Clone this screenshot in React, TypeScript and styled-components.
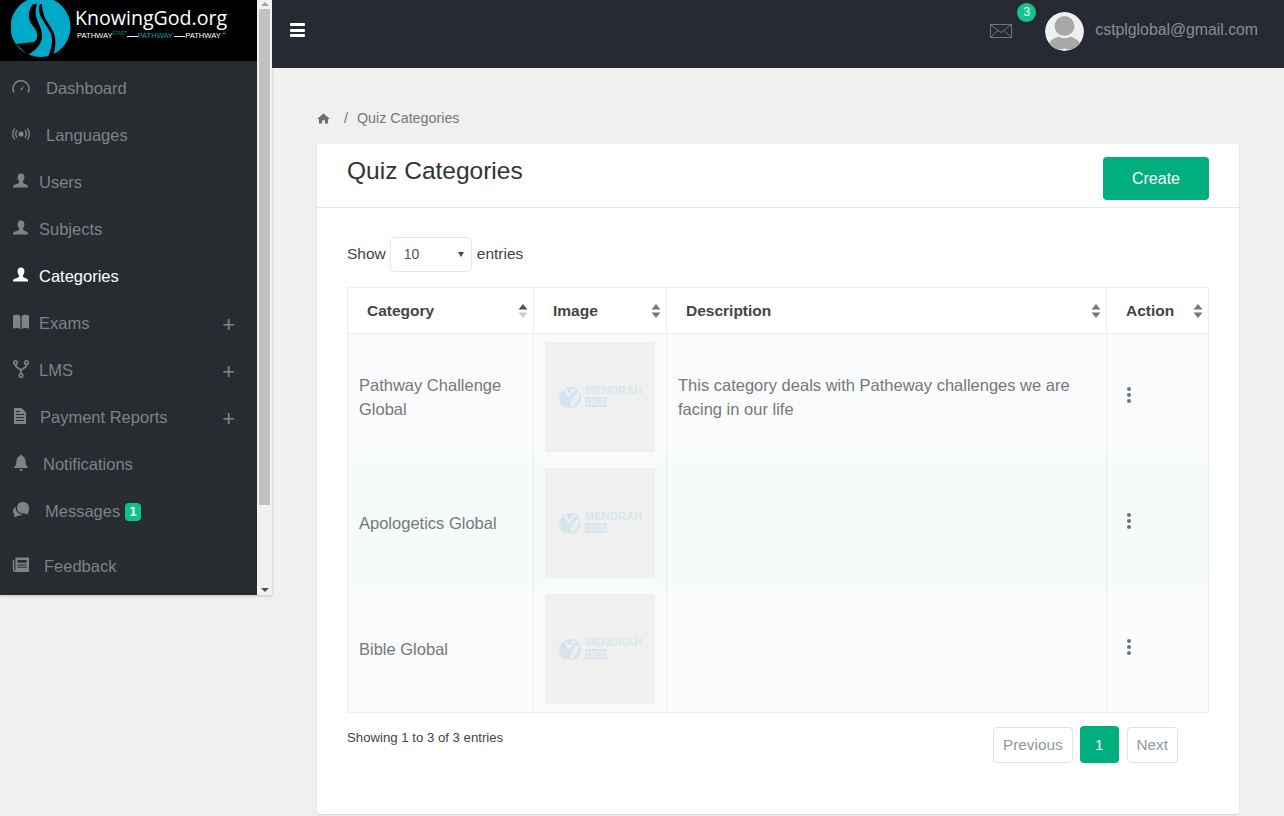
import styled, { createGlobalStyle } from 'styled-components';

const GlobalStyle = createGlobalStyle`
  html, body {
    margin: 0;
    padding: 0;
    height: 100%;
    overflow: hidden;
    background: #f0f0f0;
    font-family: "Liberation Sans", Arial, sans-serif;
  }
  * { box-sizing: border-box; }
`;

const icons: Record<string, React.ReactNode> = {
  gauge: (
    <>
      <path d="M2 14.5 A8 8 0 1 1 16 14.5" fill="none" stroke="currentColor" strokeWidth="1.5" />
      <path d="M8.3 11.5 L12 7.5 L10 12.5 Z" fill="currentColor" />
    </>
  ),
  broadcast: (
    <>
      <circle cx="9" cy="9" r="2.6" fill="currentColor" />
      <path d="M5.2 5.2 A5.5 5.5 0 0 0 5.2 12.8 M12.8 5.2 A5.5 5.5 0 0 1 12.8 12.8" fill="none" stroke="currentColor" strokeWidth="1.4" />
      <path d="M2.8 3.4 A8.6 8.6 0 0 0 2.8 14.6 M15.2 3.4 A8.6 8.6 0 0 1 15.2 14.6" fill="none" stroke="currentColor" strokeWidth="1.4" />
    </>
  ),
  user: (
    <path d="M9 1.5 C11.5 1.5 12.6 3.4 12.4 5.8 C12.3 7.6 11.4 8.8 10.9 9.6 C10.7 10.6 11.2 11.2 12.4 11.7 C14.4 12.5 16 12.9 16 14.6 L16 15.5 L1 15.5 L1 14.6 C1 12.9 3.6 12.5 5.6 11.7 C6.8 11.2 7.3 10.6 7.1 9.6 C6.6 8.8 5.7 7.6 5.6 5.8 C5.4 3.4 6.5 1.5 9 1.5 Z" fill="currentColor" />
  ),
  book: (
    <path d="M1 2.5 C3.5 1.5 6.5 1.5 8.4 3 L8.4 16 C6.5 14.6 3.5 14.6 1 15.6 Z M9.6 3 C11.5 1.5 14.5 1.5 17 2.5 L17 15.6 C14.5 14.6 11.5 14.6 9.6 16 Z" fill="currentColor" />
  ),
  fork: (
    <g fill="none" stroke="currentColor" strokeWidth="1.6">
      <circle cx="3.5" cy="2.6" r="1.8" />
      <circle cx="14.5" cy="2.6" r="1.8" />
      <circle cx="9" cy="15.6" r="1.8" />
      <path d="M3.5 4.4 C3.5 9 9 8 9 11 L9 13.8 M14.5 4.4 C14.5 9 9 8 9 11" />
    </g>
  ),
  file: (
    <>
      <path fillRule="evenodd" d="M2 1 L9.5 1 L14 5.5 L14 17 L2 17 Z M4 7 L4 8 L12 8 L12 7 Z M4 10 L4 11 L12 11 L12 10 Z M4 13 L4 14 L12 14 L12 13 Z M4 4 L4 5 L8 5 L8 4 Z" fill="currentColor" />
    </>
  ),
  bell: (
    <path d="M9 0.8 C9.8 0.8 10.2 1.3 10.2 2.1 C12.6 2.8 13.4 4.8 13.5 7.2 C13.6 10.2 14.2 11.6 15.8 13 L15.8 14 L2.2 14 L2.2 13 C3.8 11.6 4.4 10.2 4.5 7.2 C4.6 4.8 5.4 2.8 7.8 2.1 C7.8 1.3 8.2 0.8 9 0.8 Z M7.4 15 L10.6 15 C10.4 16.4 9.8 17 9 17 C8.2 17 7.6 16.4 7.4 15 Z" fill="currentColor" />
  ),
  chat: (
    <>
      <path d="M11 1 C14.6 1 17 3.4 17 6.8 C17 10 15.6 13.4 15.6 13.4 C14.6 12.6 13.4 12.4 11.4 12.4 C7.6 12.4 5 10 5 6.6 C5 3.4 7.4 1 11 1 Z" fill="currentColor" />
      <path d="M3.6 6 C3.6 10 6.4 13 10.4 13.6 C9 14.6 7.6 15 5.8 14.8 C4.8 15.6 3.6 16 1.6 16 C2.2 15.2 2.6 14.4 2.6 13.6 C1.4 12.6 1 11.4 1 10 C1 8.2 2 6.8 3.6 6 Z" fill="currentColor" />
    </>
  ),
  news: (
    <>
      <path fillRule="evenodd" d="M3.4 1.5 L17 1.5 L17 16 L3 16 C1.6 16 0.8 15 0.8 13.8 L0.8 4 L2.2 4 L2.2 13.8 C2.2 14.4 2.6 14.6 3.4 14.6 Z M5.4 4 L5.4 6.8 L14.6 6.8 L14.6 4 Z M5.4 8.4 L5.4 9.4 L14.6 9.4 L14.6 8.4 Z M5.4 10.8 L5.4 11.8 L14.6 11.8 L14.6 10.8 Z" fill="currentColor" />
    </>
  ),
};

const menu = [
  { label: 'Dashboard', icon: 'gauge', gap: 16 },
  { label: 'Languages', icon: 'broadcast', gap: 16 },
  { label: 'Users', icon: 'user', gap: 9 },
  { label: 'Subjects', icon: 'user', gap: 9 },
  { label: 'Categories', icon: 'user', gap: 9, active: true },
  { label: 'Exams', icon: 'book', gap: 9, more: true },
  { label: 'LMS', icon: 'fork', gap: 9, more: true },
  { label: 'Payment Reports', icon: 'file', gap: 10, more: true },
  { label: 'Notifications', icon: 'bell', gap: 13 },
  { label: 'Messages', icon: 'chat', gap: 15, badge: '1' },
  { label: 'Feedback', icon: 'news', gap: 14, tall: true },
];

const rows = [
  { name: 'Pathway Challenge Global', text: 'This category deals with Patheway challenges we are facing in our life' },
  { name: 'Apologetics Global', text: '' },
  { name: 'Bible Global', text: '' },
];

const columns = [
  { label: 'Category', width: 185, up: true },
  { label: 'Image', width: 133 },
  { label: 'Description', width: 440 },
  { label: 'Action', width: 102 },
];

function SortArrows({ up }: { up?: boolean }) {
  return (
    <SortIcon viewBox="0 0 10 16" width="10" height="16">
      <path d="M5 1 L9.5 6.5 L0.5 6.5 Z" fill={up ? '#555' : '#777'} />
      <path d="M5 15 L9.5 9.5 L0.5 9.5 Z" fill={up ? '#ccc' : '#777'} />
    </SortIcon>
  );
}

function Placeholder() {
  return (
    <Thumb>
      <svg viewBox="0 0 26 26" width="25" height="25">
        <path d="M2 8 C0 15 3 22 10 25 C6 20 4 14 2 8 Z" fill="#f5e3cc" />
        <circle cx="14" cy="13" r="11" fill="#d3e4ed" />
        <path d="M7 5 L12 13 L20 4 Z" fill="#eef2f3" />
        <circle cx="13" cy="6" r="2.4" fill="#d3e4ed" />
        <path d="M14 23 C13 17 17 10 23 7 C24 14 20 21 14 23 Z" fill="#e6eff2" />
      </svg>
      <ThumbText>
        <ThumbName>MENORAH</ThumbName>
        <ThumbTag>OES</ThumbTag>
      </ThumbText>
    </Thumb>
  );
}

export default function App() {
  return (
    <>
      <GlobalStyle />
      <Page>
        <Sidebar>
          <SideInner>
            <Logo>
              <svg viewBox="11 -3 60 60" width="60" height="60">
                <circle cx="40.5" cy="27" r="30" fill="#00a9c7" />
                <path d="M33 4 C27 12 28 20 33 26 C38 32 39 38 34 42 L16 44 L28 55 C36 50 42 44 42 36 C42 28 38 24 36 16 C35 12 36 8 37 4 Z" fill="#000" />
                <path d="M40 4 C38 8 39 14 42 19 C46 26 52 32 52 40 C52 46 50 52 47 60 L51 60 C55 52 56 44 55 38 C54 30 48 24 45 18 C43 14 42 8 42 4 Z" fill="#000" />
              </svg>
              <LogoText>
                <LogoTitle>KnowingGod.org</LogoTitle>
                <LogoSub>
                  <span>PATHWAY</span>
                  <LogoStart>START</LogoStart>
                  <LogoDash />
                  <LogoPath>PATHWAY</LogoPath>
                  <LogoDash />
                  <span>PATHWAY</span>
                  <LogoPlus>+</LogoPlus>
                </LogoSub>
              </LogoText>
            </Logo>
            <Menu>
              {menu.map((item) => (
                <MenuItem key={item.label} $active={item.active} $tall={item.tall}>
                  <MenuIcon viewBox="0 0 18 18" width="18" height="18" style={{ marginRight: item.gap }}>
                    {icons[item.icon]}
                  </MenuIcon>
                  {item.label}
                  {item.badge && <MenuBadge>{item.badge}</MenuBadge>}
                  {item.more && <Plus>+</Plus>}
                </MenuItem>
              ))}
            </Menu>
          </SideInner>
          <ScrollTrack>
            <ScrollArrow />
            <ScrollThumb />
            <ScrollArrow $down />
          </ScrollTrack>
        </Sidebar>
        <Main>
          <TopBar>
            <Burger>
              <span />
              <span />
              <span />
            </Burger>
            <TopRight>
              <MailWrap>
                <svg viewBox="0 0 22 14" width="22" height="14">
                  <rect x="0.5" y="0.5" width="21" height="13" fill="none" stroke="#6d7680" />
                  <path d="M1 1 L11 8.5 L21 1 M1 13 L8 6.5 M21 13 L14 6.5" fill="none" stroke="#6d7680" />
                </svg>
                <MailBadge>3</MailBadge>
              </MailWrap>
              <Avatar>
                <svg viewBox="0 0 39 39" width="39" height="39">
                  <circle cx="19.5" cy="19.5" r="19.5" fill="#f0f0f0" />
                  <circle cx="19.5" cy="14" r="10" fill="#a9a9a9" />
                  <path d="M4 33 C4 28 10 26 14 24.5 C17 26.5 22 26.5 25 24.5 C29 26 35 28 35 33 C31 37 25 39 19.5 36.5 C14 39 8 37 4 33 Z" fill="#a9a9a9" />
                </svg>
              </Avatar>
              <Email>cstplglobal@gmail.com</Email>
            </TopRight>
          </TopBar>
          <Content>
            <Breadcrumb>
              <svg viewBox="0 0 14 12" width="13" height="11">
                <path d="M7 0.5 L14 6.5 L12 6.5 L12 11.5 L8.5 11.5 L8.5 8 L5.5 8 L5.5 11.5 L2 11.5 L2 6.5 L0 6.5 Z" fill="#6f6f6f" />
              </svg>
              <Slash>/</Slash>
              <span>Quiz Categories</span>
            </Breadcrumb>
            <Card>
              <CardHeader>
                <Title>Quiz Categories</Title>
                <CreateButton>Create</CreateButton>
              </CardHeader>
              <CardBody>
                <ShowRow>
                  <ShowLabel>Show</ShowLabel>
                  <FakeSelect>
                    10
                    <Caret />
                  </FakeSelect>
                  <ShowLabel>entries</ShowLabel>
                </ShowRow>
                <Table>
                  <colgroup>
                    {columns.map((c) => (
                      <col key={c.label} width={c.width} />
                    ))}
                  </colgroup>
                  <thead>
                    <tr>
                      {columns.map((c) => (
                        <HeadCell key={c.label}>
                          {c.label}
                          <SortArrows up={c.up} />
                        </HeadCell>
                      ))}
                    </tr>
                  </thead>
                  <tbody>
                    {rows.map((row, i) => (
                      <BodyRow key={row.name} $even={i % 2 === 1}>
                        <TextCell>{row.name}</TextCell>
                        <TextCell>
                          <Placeholder />
                        </TextCell>
                        <TextCell>{row.text}</TextCell>
                        <ActionCell>
                          <Dots>
                            <i />
                            <i />
                            <i />
                          </Dots>
                        </ActionCell>
                      </BodyRow>
                    ))}
                  </tbody>
                </Table>
                <TableFooter>
                  <Info>Showing 1 to 3 of 3 entries</Info>
                  <Pager>
                    <PageButton>Previous</PageButton>
                    <CurrentPage>1</CurrentPage>
                    <PageButton>Next</PageButton>
                  </Pager>
                </TableFooter>
              </CardBody>
            </Card>
          </Content>
        </Main>
      </Page>
    </>
  );
}

const Page = styled.div`
  display: flex;
  align-items: flex-start;
  height: 816px;
  overflow: hidden;
`;

const Sidebar = styled.aside`
  flex: 0 0 272px;
  height: 595px;
  display: flex;
  box-shadow: 0 1px 3px rgba(0, 0, 0, 0.2);
`;

const SideInner = styled.div`
  width: 257px;
  background: #272c30;
  overflow: hidden;
`;

const Logo = styled.div`
  height: 61px;
  background: #000;
  display: flex;
  padding-left: 11px;
  overflow: hidden;
  svg {
    flex: none;
    margin-top: -3px;
  }
`;

const LogoText = styled.div`
  margin-left: 4px;
  padding-top: 6px;
  color: #fff;
`;

const LogoTitle = styled.div`
  font-family: "Open Sans", sans-serif;
  font-size: 19.6px;
  line-height: 24px;
  white-space: nowrap;
`;

const LogoSub = styled.div`
  display: flex;
  align-items: center;
  height: 10px;
  margin: 1px 0 0 2px;
  font-size: 7.6px;
  line-height: 10px;
  white-space: nowrap;
`;

const LogoStart = styled.span`
  width: 14px;
  font-size: 4.5px;
  line-height: 5px;
  color: #0f8a5f;
  transform: translateY(-3px);
`;

const LogoDash = styled.span`
  width: 11px;
  height: 1px;
  background: #e8e8e8;
`;

const LogoPath = styled.span`
  margin-right: 1px;
  color: #0a9ab5;
`;

const LogoPlus = styled.span`
  margin-left: 1px;
  color: #e07a10;
  font-size: 7px;
  line-height: 6px;
  transform: translateY(-2px);
`;

const Menu = styled.nav`
  display: flex;
  flex-direction: column;
  padding-top: 4px;
`;

const MenuItem = styled.a<{ $active?: boolean; $tall?: boolean }>`
  display: flex;
  align-items: center;
  height: 47px;
  margin-top: ${(p) => (p.$tall ? '8px' : '0')};
  padding: 0 22px 0 12px;
  font-size: 16.5px;
  color: ${(p) => (p.$active ? '#fff' : '#7d8387')};
`;

const MenuIcon = styled.svg`
  flex: none;
  margin-top: -4px;
`;

const MenuBadge = styled.span`
  margin-left: 5px;
  width: 16px;
  height: 18px;
  border-radius: 4px;
  background: #0cc28f;
  color: #fff;
  font-family: "DejaVu Sans Mono", monospace;
  font-size: 12px;
  font-weight: 700;
  line-height: 18px;
  text-align: center;
`;

const Plus = styled.span`
  margin-left: auto;
  font-size: 22px;
  font-weight: 400;
  line-height: 1;
  margin-top: 3px;
`;

const ScrollTrack = styled.div`
  width: 15px;
  background: #f1f1f1;
  display: flex;
  flex-direction: column;
  align-items: center;
`;

const ScrollArrow = styled.div<{ $down?: boolean }>`
  flex: none;
  width: 0;
  height: 0;
  border-left: 4px solid transparent;
  border-right: 4px solid transparent;
  border-top: ${(p) => (p.$down ? '4px solid #505050' : '0')};
  border-bottom: ${(p) => (p.$down ? '0' : '4px solid #a3a3a3')};
  margin-top: ${(p) => (p.$down ? 'auto' : '0')};
  margin-bottom: ${(p) => (p.$down ? '3px' : '0')};
  transform: translateY(${(p) => (p.$down ? '0' : '2px')});
`;

const ScrollThumb = styled.div`
  width: 11px;
  height: 496px;
  margin-top: 5px;
  background: #c1c1c1;
`;

const Main = styled.main`
  flex: 1;
  min-width: 0;
`;

const TopBar = styled.header`
  height: 68px;
  background: #262a33;
  display: flex;
  align-items: center;
  padding: 0 26px 0 18px;
`;

const Burger = styled.div`
  display: flex;
  flex-direction: column;
  gap: 2.5px;
  margin-top: -8px;
  span {
    display: block;
    width: 15px;
    height: 3px;
    border-radius: 1px;
    background: #fff;
  }
`;

const TopRight = styled.div`
  margin-left: auto;
  display: flex;
  align-items: center;
`;

const MailWrap = styled.div`
  position: relative;
  width: 22px;
  height: 14px;
  margin: 0 33px 7px 0;
  svg {
    display: block;
  }
`;

const MailBadge = styled.span`
  position: absolute;
  left: 27px;
  top: -21px;
  width: 19px;
  height: 19px;
  border-radius: 50%;
  background: #14c38e;
  color: #fff;
  font-size: 12px;
  line-height: 19px;
  text-align: center;
`;

const Avatar = styled.div`
  width: 39px;
  height: 39px;
  margin: 0 11px 6px 0;
  border-radius: 50%;
  overflow: hidden;
  svg {
    display: block;
  }
`;

const Email = styled.span`
  font-size: 15.8px;
  color: #8a8d90;
  margin-bottom: 8px;
`;

const Content = styled.div`
  padding: 41px 45px 0;
`;

const Breadcrumb = styled.div`
  display: flex;
  align-items: center;
  height: 18px;
  font-size: 14.3px;
  color: #777;
`;

const Slash = styled.span`
  margin: 0 9px 0 14px;
`;

const Card = styled.section`
  margin-top: 17px;
  height: 670px;
  background: #fff;
  border-radius: 3px;
  box-shadow: 0 1px 2px rgba(0, 0, 0, 0.1);
`;

const CardHeader = styled.div`
  height: 64px;
  padding: 13px 30px 0;
  display: flex;
  justify-content: space-between;
  align-items: flex-start;
  border-bottom: 1px solid #e9e9e9;
`;

const Title = styled.h2`
  margin: 0;
  font-size: 24.5px;
  font-weight: 400;
  line-height: 28px;
  color: #333;
`;

const CreateButton = styled.button`
  width: 106px;
  height: 43px;
  border: none;
  border-radius: 4px;
  background: #00ae7e;
  color: #fff;
  font-family: inherit;
  font-size: 16px;
`;

const CardBody = styled.div`
  padding: 29px 30px 0;
`;

const ShowRow = styled.div`
  display: flex;
  align-items: center;
  gap: 4px;
  height: 35px;
  font-size: 15.5px;
  color: #444;
`;

const ShowLabel = styled.span`
  margin-bottom: 2px;
`;

const FakeSelect = styled.div`
  position: relative;
  width: 82px;
  height: 35px;
  margin-right: 1px;
  padding-left: 13px;
  border: 1px solid #e6e6e6;
  border-radius: 5px;
  background: #fff;
  font-size: 14px;
  line-height: 33px;
  color: #555;
`;

const Caret = styled.span`
  position: absolute;
  right: 7px;
  top: 14px;
  border-left: 3px solid transparent;
  border-right: 3px solid transparent;
  border-top: 5px solid #444;
`;

const Table = styled.table`
  margin-top: 15px;
  width: 862px;
  table-layout: fixed;
  border-collapse: separate;
  border-spacing: 0;
  border: 1px solid #eeeeee;
`;

const HeadCell = styled.th`
  position: relative;
  height: 46px;
  padding: 0 19px;
  border-bottom: 1px solid #eeeeee;
  background: #fff;
  font-size: 15.5px;
  font-weight: 700;
  text-align: left;
  color: #444;
  & + & {
    border-left: 1px solid #eeeeee;
  }
`;

const SortIcon = styled.svg`
  position: absolute;
  right: 5px;
  top: 15px;
`;

const BodyRow = styled.tr<{ $even?: boolean }>`
  height: 126px;
  background: ${(p) => (p.$even ? '#f5fbfb' : '#fafbfd')};
`;

const TextCell = styled.td`
  padding: 0 11px;
  font-size: 16.5px;
  line-height: 24px;
  color: #777;
  & + & {
    border-left: 1px solid #eeeeee;
  }
`;

const ActionCell = styled.td`
  padding: 0 20px;
  border-left: 1px solid #eeeeee;
`;

const Thumb = styled.div`
  width: 110px;
  height: 110px;
  background: #f0f0f0;
  display: flex;
  align-items: center;
  gap: 3px;
  padding-left: 12px;
`;

const ThumbText = styled.div`
  display: flex;
  flex-direction: column;
  align-items: flex-start;
  margin-top: -3px;
`;

const ThumbName = styled.span`
  font-size: 11px;
  font-weight: 700;
  line-height: 12px;
  color: #d9e6ed;
`;

const ThumbTag = styled.span`
  padding: 0 1px;
  margin-top: 1px;
  background: #d9e6ed;
  color: #eef3f5;
  font-size: 9.5px;
  line-height: 10px;
`;

const Dots = styled.div`
  display: flex;
  flex-direction: column;
  gap: 2px;
  margin-top: -4px;
  i {
    width: 4px;
    height: 4px;
    border-radius: 50%;
    background: #6c757d;
  }
`;

const TableFooter = styled.div`
  display: flex;
  justify-content: space-between;
  align-items: flex-start;
  padding: 13px 31px 0 0;
`;

const Info = styled.div`
  margin-top: 2px;
  font-size: 13.2px;
  line-height: 20px;
  color: #444;
`;

const Pager = styled.div`
  display: flex;
  align-items: center;
  gap: 7px;
`;

const PageButton = styled.div`
  height: 36px;
  padding: 0 9px;
  border: 1px solid #e2e2e2;
  border-radius: 4px;
  font-size: 15.3px;
  line-height: 34px;
  color: #8e98a3;
`;

const CurrentPage = styled.div`
  width: 39px;
  height: 37px;
  margin-right: 1px;
  border-radius: 4px;
  background: #00ae7e;
  color: #fff;
  font-size: 15px;
  line-height: 37px;
  text-align: center;
`;
